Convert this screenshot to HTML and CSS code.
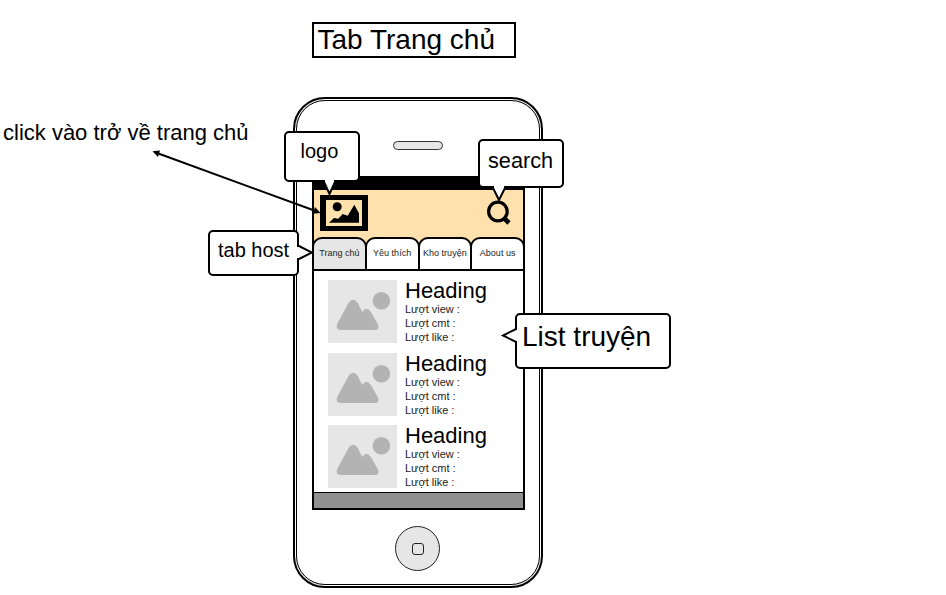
FILE: index.html
```html
<!DOCTYPE html>
<html lang="vi">
<head>
<meta charset="utf-8">
<title>Tab Trang chủ</title>
<link rel="stylesheet" href="styles.css">
</head>
<body>
<svg width="0" height="0" class="defs">
  <symbol id="photo" viewBox="0 0 69 63">
    <circle cx="53.4" cy="20.8" r="8.8"/>
    <path d="M9.3 43.8 L20.4 23.2 Q25 16.5 29.6 22.8 L34.3 32 Q39 25.200 43 32.300 L50 44.500 Q51.800 50 46.500 50 H13 Q6.800 49.500 9.300 43.800Z"/>
  </symbol>
</svg>
<main class="canvas">
  <h1 class="title">Tab Trang chủ</h1>
  <section class="phone">
    <div class="body">
      <div class="speaker"></div>
      <div class="screen">
        <div class="status"></div>
        <header class="header">
          <svg class="logo" width="48" height="36" viewBox="0 0 48 36">
            <path fill-rule="evenodd" d="M0 0H48V36H0ZM6 5V31H42V5Z"/>
            <circle cx="17.200" cy="11.800" r="4.500"/>
            <path d="M9 27.700L14 23L18.300 23.700L22.700 19L27.700 20.700L34.300 9.700L39 18.300V27.700Z"/>
          </svg>
          <svg class="find" width="26" height="27" viewBox="0 0 26 27">
            <circle cx="11.900" cy="12.500" r="9.300" fill="none" stroke="#000" stroke-width="3.200"/>
            <path d="M17.500 18.500L23 24" stroke="#000" stroke-width="4.600"/>
          </svg>
        </header>
        <nav class="tabs">
          <span class="tab active">Trang chủ</span>
          <span class="tab">Yêu thích</span>
          <span class="tab">Kho truyện</span>
          <span class="tab">About us</span>
        </nav>
        <div class="list">
          <article class="item">
            <svg class="thumb"><use href="#photo"/></svg>
            <div class="info"><h2>Heading</h2><p>Lượt view :</p><p>Lượt cmt :</p><p>Lượt like :</p></div>
          </article>
          <article class="item">
            <svg class="thumb"><use href="#photo"/></svg>
            <div class="info"><h2>Heading</h2><p>Lượt view :</p><p>Lượt cmt :</p><p>Lượt like :</p></div>
          </article>
          <article class="item">
            <svg class="thumb"><use href="#photo"/></svg>
            <div class="info"><h2>Heading</h2><p>Lượt view :</p><p>Lượt cmt :</p><p>Lượt like :</p></div>
          </article>
        </div>
        <div class="bottom"></div>
      </div>
      <div class="home"><div class="square"></div></div>
    </div>
  </section>

  <p class="note">click vào trở về trang chủ</p>
  <svg class="arrow" width="180" height="76" viewBox="0 0 180 76">
    <path d="M6 7L166 65.500" stroke="#000" stroke-width="2"/>
    <path d="M1.500 5.300L9 4.500L7 11ZM169.500 67L162 67.800L164 61Z"/>
  </svg>
  <div class="callout c-logo"><span>logo</span>
    <svg class="tail" width="14" height="16" viewBox="0 0 14 16"><path d="M1 0V2L6.500 14L12 2V0"/></svg>
  </div>
  <div class="callout c-search"><span>search</span>
    <svg class="tail" width="14" height="16" viewBox="0 0 14 16"><path d="M1 0V2L7 14L13 2V0"/></svg>
  </div>
  <div class="callout c-tab"><span>tab host</span>
    <svg class="tail" width="17" height="16" viewBox="0 0 17 16"><path d="M0 1H2L15 7.500L2 14H0"/></svg>
  </div>
  <div class="callout c-list"><span>List truyện</span>
    <svg class="tail" width="17" height="16" viewBox="0 0 17 16"><path d="M17 1H16L3 7.500L16 14H17"/></svg>
  </div>
</main>
</body>
</html>
```
FILE: styles.css
```css
* { box-sizing: border-box; }
body { margin: 0; background: #fff; color: #000; font-family: "Liberation Sans", Arial, sans-serif; }
h1, h2, p { margin: 0; font-weight: 400; }
.defs { position: absolute; }
.canvas { position: relative; width: 946px; height: 595px; overflow: hidden; padding-top: 22px; white-space: nowrap; }
.title { width: 204px; height: 36px; margin-left: 312px; padding-left: 3.500px; border: 2px solid #000; font-size: 28px; line-height: 31px; }
.phone { width: 250px; height: 491px; margin: 39px 0 0 293px; border: 2px solid #000; border-radius: 32px; padding: 1px; background: linear-gradient(#fff, #fff) center / 100% 430px no-repeat, linear-gradient(#fff, #fff) center / 190px 100% no-repeat, #e6e6e6; }
.body { height: 100%; border: 1px solid #000; border-radius: 29px; background: #fff; display: flex; flex-direction: column; align-items: center; padding-top: 40px; }
.speaker { width: 50px; height: 9px; border: 1px solid #333; border-radius: 5px; background: #e6e6e6; }
.screen { width: 213px; height: 334px; margin-top: 26px; margin-left: 1px; border: 2px solid #000; display: flex; flex-direction: column; flex: none; }
.status { height: 12px; background: #000; flex: none; }
.header { height: 47px; flex: none; background: #ffe1ae; display: flex; justify-content: space-between; padding: 5px 11px 0 6px; }
.find { margin-top: 4px; }
.tabs { display: flex; height: 34px; flex: none; background: linear-gradient(#ffe1ae 10px, #fff 10px); margin: 0; }
.tab { flex: 1; min-width: 0; margin: 0 -1px; border: 2px solid #000; border-radius: 10px 10px 0 0; background: #fff; font-size: 9px; line-height: 28px; text-align: center; color: #222; }
.tab:first-child { margin-left: -2px; }
.tab:last-child { margin-right: -2px; }
.active { background: #e6e6e6; }
.list { flex: 1; display: flex; flex-direction: column; gap: 9.500px; padding: 9px 14px 0; }
.item { display: flex; height: 63px; gap: 8px; flex: none; }
.thumb { width: 69px; height: 63px; background: #e6e6e6; fill: #b3b3b3; }
.info h2 { font-size: 22px; line-height: 22px; }
.info p { font-size: 11px; line-height: 14px; color: #222; }
.bottom { height: 16px; flex: none; border-top: 1px solid #000; background: #919191; }
.home { width: 45px; height: 45px; flex: none; margin-top: 16px; margin-right: 1px; border: 1px solid #222; border-radius: 50%; background: #e6e6e6; display: flex; align-items: center; justify-content: center; }
.square { width: 12px; height: 12px; border: 1px solid #222; border-radius: 3px; }
.note { position: absolute; left: 3px; top: 120px; font-size: 22px; line-height: 25px; }
.arrow { position: absolute; left: 151px; top: 146px; }
.callout { position: absolute; border: 2px solid #000; border-radius: 5px; background: #fff; font-size: 20px; line-height: 23px; }
.tail { position: absolute; fill: #fff; stroke: #000; stroke-width: 2px; }
.c-logo { left: 284px; top: 131px; width: 76px; height: 51px; padding: 7px 0 0 14.500px; }
.c-logo .tail { left: 37px; top: 47px; }
.c-search { left: 478px; top: 139px; width: 86px; height: 49px; padding: 8px 0 0 8px; font-size: 21.700px; }
.c-search .tail { left: 12px; top: 45px; }
.c-tab { left: 208px; top: 230px; width: 91px; height: 46px; padding: 7px 0 0 8px; }
.c-tab .tail { left: 87px; top: 13px; }
.c-list { left: 515px; top: 313px; width: 156px; height: 56px; padding: 6px 0 0 5px; font-size: 28px; line-height: 31px; }
.c-list .tail { left: -17px; top: 13px; }
```
